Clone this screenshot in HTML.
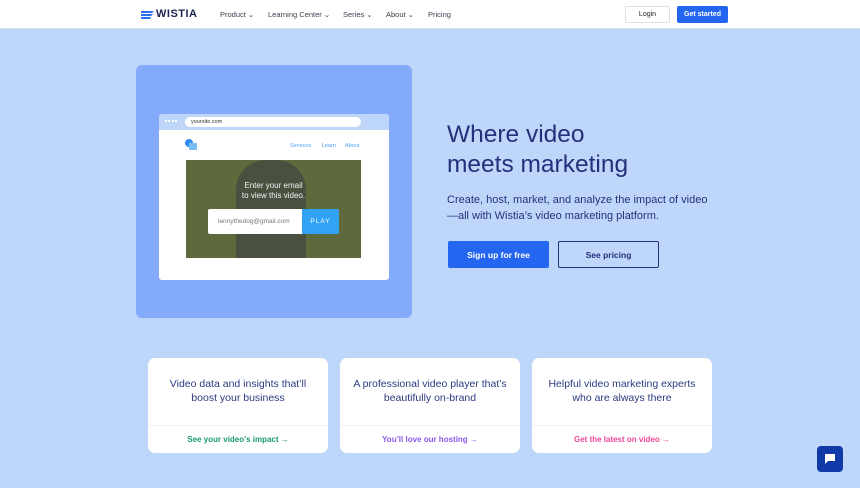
<!DOCTYPE html>
<html><head><style>
*{box-sizing:border-box;margin:0;padding:0}
body{width:860px;height:488px;overflow:hidden;background:#bed6fa;font-family:"Liberation Sans",sans-serif;position:relative}
.nav{position:absolute;left:0;top:0;width:860px;height:29px;background:#fff;border-bottom:1px solid #d6e2f5}
.nav span{position:absolute;top:10px;font-size:7.5px;color:#3a3f4d}
.abs{position:absolute}
.btn{position:absolute;font-size:7px;border-radius:2px;display:flex;align-items:center;justify-content:center}
.card{position:absolute;top:358px;width:180px;height:95px;background:#fff;border-radius:7px}
.card p{position:absolute;top:19px;width:100%;text-align:center;font-size:10.5px;line-height:14px;color:#2d3a80}
.card .l{position:absolute;top:67px;width:100%;height:28px;border-top:1px solid #eceff5;text-align:center;font-size:8px;line-height:28px;font-weight:bold}
</style></head><body>
<div class="nav">
<svg class="abs" style="left:141px;top:10px" width="13" height="9"><path d="M0 1h13l-2 2H0zM0 4h12l-2 2H0zM0 7h10l-1 2H0z" fill="#2d6cf5"/></svg>
<span style="left:156px;top:8px;font-size:11px;font-weight:bold;color:#1a2350;letter-spacing:0.5px">WISTIA</span>
<span style="left:220px">Product ⌄</span>
<span style="left:268px">Learning Center ⌄</span>
<span style="left:343px">Series ⌄</span>
<span style="left:386px">About ⌄</span>
<span style="left:428px">Pricing</span>
<div class="btn" style="left:625px;top:6px;width:45px;height:17px;border:1px solid #dde2ea;color:#222">Login</div>
<div class="btn" style="left:677px;top:6px;width:51px;height:17px;background:#2566f0;color:#fff;font-weight:bold">Get started</div>
</div>
<div class="abs" style="left:136px;top:65px;width:276px;height:253px;background:#84aafc;border-radius:6px;overflow:hidden"></div>
<div class="abs" style="left:159px;top:114px;width:230px;height:166px;background:#fff;border-radius:3px;overflow:hidden">
 <div style="height:16px;background:#bed6fa;position:relative">
  <div class="abs" style="left:6px;top:6px;width:12px;height:2px;border-top:2px dotted #fff"></div>
  <div class="abs" style="left:26px;top:3px;width:176px;height:10px;background:#fff;border-radius:5px;font-size:5.5px;padding:2px 6px;color:#333">yoursite.com</div>
 </div>
 <div class="abs" style="left:26px;top:25px;width:8px;height:8px;border-radius:50%;background:#2d8cf0"></div>
 <div class="abs" style="left:30px;top:29px;width:8px;height:7px;background:#7bbcf5"></div>
 <div class="abs" style="left:131px;top:29px;font-size:5.5px;color:#4aa3f5">Services&nbsp;&nbsp;&nbsp;&nbsp;&nbsp;&nbsp;&nbsp;Learn&nbsp;&nbsp;&nbsp;&nbsp;&nbsp;&nbsp;About</div>
 <div class="abs" style="left:27px;top:46px;width:175px;height:98px;background:#5e6a3c">
  <div class="abs" style="left:50px;top:0;width:70px;height:98px;background:#4a5040;border-radius:30px 30px 0 0"></div>
  <div class="abs" style="width:100%;top:21px;text-align:center;color:#f2f2f2;font-size:8px;line-height:10px">Enter your email<br>to view this video.</div>
  <div class="abs" style="left:22px;top:49px;width:94px;height:25px;background:#fff;border-radius:2px 0 0 2px;font-size:6.5px;color:#777;line-height:25px;padding-left:10px">lennythedog@gmail.com</div>
  <div class="abs" style="left:116px;top:49px;width:37px;height:25px;background:#31a2f4;border-radius:0 2px 2px 0;font-size:6.5px;color:#fff;line-height:25px;text-align:center;letter-spacing:1px">PLAY</div>
 </div>
</div>
<div class="abs" style="left:447px;top:120px;font-size:24.5px;line-height:30px;color:#25307a">Where video<br>meets marketing</div>
<div class="abs" style="left:447px;top:192px;font-size:11px;line-height:16px;color:#25307a">Create, host, market, and analyze the impact of video<br>—all with Wistia’s video marketing platform.</div>
<div class="btn" style="left:448px;top:241px;width:101px;height:27px;background:#2566f0;color:#fff;font-size:8.5px;font-weight:bold">Sign up for free</div>
<div class="btn" style="left:558px;top:241px;width:101px;height:27px;border:1.5px solid #25307a;color:#25307a;font-size:8.5px;font-weight:bold">See pricing</div>
<div class="card" style="left:148px"><p>Video data and insights that’ll<br>boost your business</p><div class="l" style="color:#1a9c6a">See your video’s impact →</div></div>
<div class="card" style="left:340px"><p>A professional video player that’s<br>beautifully on-brand</p><div class="l" style="color:#8a5cf0">You’ll love our hosting →</div></div>
<div class="card" style="left:532px"><p>Helpful video marketing experts<br>who are always there</p><div class="l" style="color:#f0479a">Get the latest on video →</div></div>
<div class="abs" style="left:817px;top:446px;width:26px;height:26px;background:#0f3aa8;border-radius:4px"></div>
<svg class="abs" style="left:824px;top:453px" width="12" height="12"><path d="M1 1h10v7H4L1 11z" fill="#fff"/></svg>
</body></html>
